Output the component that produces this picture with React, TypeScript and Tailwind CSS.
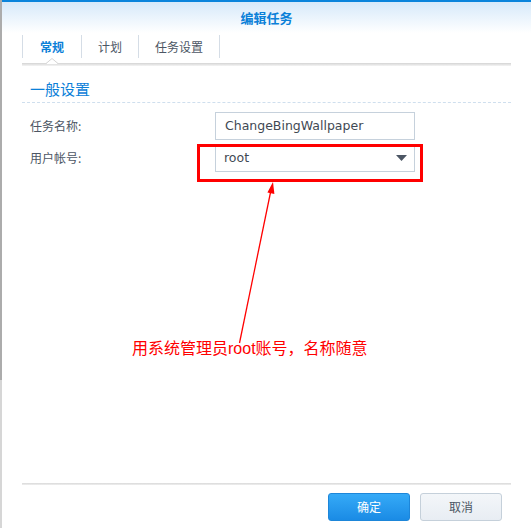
import React from "react";

const tabs = [
  { label: "常规", w: "w-[59px]", active: true },
  { label: "计划", w: "w-[57px]", active: false },
  { label: "任务设置", w: "w-[82px]", active: false },
];

export default function App() {
  return (
    <div className="relative flex w-[531px] h-[528px] overflow-hidden bg-white font-['Noto_Sans_CJK_SC',sans-serif] text-[12px] text-[#4c5664]">
      {/* left window edge */}
      <div className="flex flex-col w-[2px]">
        <div className="h-[380px] bg-[#acacac]" />
        <div className="flex-1 bg-[#d6d6d6]" />
      </div>

      <div className="flex flex-1 flex-col">
        {/* title bar */}
        <div className="flex h-[33px] items-center justify-center border-t-2 border-[#0a84dc] bg-gradient-to-b from-[#d6e9fa] to-white">
          <span className="text-[13px] font-bold text-[#0b80d8] leading-none">编辑任务</span>
        </div>

        <div className="flex flex-1 flex-col pl-[20px] pr-[20px]">
          {/* tabs */}
          <div className="mt-[2px] flex h-[23px]">
            {tabs.map((t, i) => (
              <div
                key={t.label}
                className={`${t.w} flex items-center justify-center border-l border-[#d5dde6] ${
                  i === tabs.length - 1 ? "border-r" : ""
                } ${t.active ? "font-bold text-[#0b80d8]" : "text-[#4c5664]"}`}
              >
                {t.label}
              </div>
            ))}
          </div>
          <div className="relative mt-[5px] h-[3px] bg-gradient-to-b from-[#d4d4d4] via-[#e4e4e4] to-[#f4f4f4]">
            <svg className="absolute left-[23px] top-[-5px]" width="14" height="6" viewBox="0 0 14 6">
              <polygon points="1,6 7,0 13,6" fill="white" />
              <polyline points="1,5.5 7,0.5 13,5.5" fill="none" stroke="#d4d4d4" strokeWidth="1" />
            </svg>
          </div>

          {/* section */}
          <div className="mt-[13px] border-b border-dashed border-[#cfdfee] pb-[3px] pl-[8px]">
            <span className="text-[15px] leading-[20px] text-[#0b80d8]">一般设置</span>
          </div>

          <div className="mt-[9px] flex items-center">
            <div className="w-[193px] pl-[8px]">任务名称:</div>
            <div className="flex h-[28px] w-[200px] items-center border border-[#c6d1dc] pl-[9px] font-['DejaVu_Sans',sans-serif] text-[12.5px] text-[#3f4954]">
              ChangeBingWallpaper
            </div>
          </div>
          <div className="mt-[4px] flex items-center">
            <div className="w-[193px] pl-[8px]">用户帐号:</div>
            <div className="flex h-[28px] w-[200px] items-center justify-between border border-[#c6d1dc] pl-[8px] pr-[7px] font-['DejaVu_Sans',sans-serif] text-[12.5px] text-[#3f4954]">
              <span>root</span>
              <svg width="11" height="6" viewBox="0 0 11 6">
                <polygon points="0,0 11,0 5.5,6" fill="#4c5664" />
              </svg>
            </div>
          </div>

          {/* footer */}
          <div className="mt-auto h-[2px] bg-gradient-to-b from-[#d9d9d9] to-[#efefef]" />
          <div className="mb-[7px] mt-[8px] flex justify-end gap-[10px] pr-[9px]">
            <button className="h-[28px] w-[82px] rounded-[3px] border border-[#1d86d9] bg-gradient-to-b from-[#35aaf7] to-[#1a8be5] text-[12px] text-white">
              确定
            </button>
            <button className="h-[28px] w-[82px] rounded-[3px] border border-[#c5d0da] bg-gradient-to-b from-[#f3f6f9] to-[#e8edf3] text-[12px] text-[#4c5664]">
              取消
            </button>
          </div>
        </div>
      </div>

      {/* annotations */}
      <div className="absolute left-[197px] top-[144px] h-[38px] w-[226px] border-[3px] border-[#ff0000]" />
      <svg className="absolute left-0 top-0" width="531" height="528" viewBox="0 0 531 528">
        <line x1="239.5" y1="343" x2="271" y2="190" stroke="#ff0000" strokeWidth="1.3" />
        <polygon points="273,182 274.4,194 267.4,192.4" fill="#ff0000" />
      </svg>
      <div className="absolute left-[132px] top-[339px] whitespace-nowrap text-[16px] leading-[20px] text-[#ff0000] font-['Liberation_Sans','Noto_Sans_CJK_SC',sans-serif]">
        用系统管理员root账号，名称随意
      </div>
    </div>
  );
}
